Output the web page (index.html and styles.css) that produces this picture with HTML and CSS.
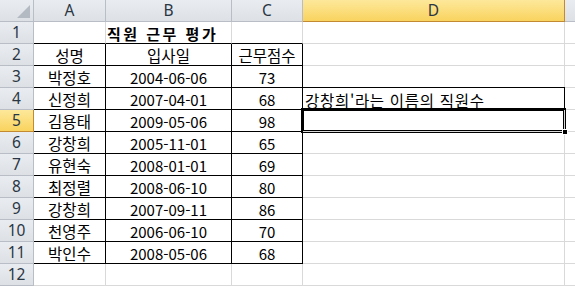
FILE: index.html
```html
<!DOCTYPE html>
<html lang="ko">
<head>
<meta charset="utf-8">
<link rel="stylesheet" href="styles.css">
</head>
<body>
<div class="sheet">
  <div class="grid">
    <div class="hd corner"><span class="tri"></span></div>
    <div class="hd col">A</div>
    <div class="hd col">B</div>
    <div class="hd col">C</div>
    <div class="hd col sel">D</div>
    <div class="hd col"></div>

    <div class="hd row">1</div>
    <div class="c title-cell bb"></div>
    <div class="c title-cell bb"><span class="title">직원 근무 평가</span></div>
    <div class="c title-cell bb"></div>
    <div class="c"></div>
    <div class="c"></div>

    <div class="hd row">2</div>
    <div class="c t ctr">성명</div>
    <div class="c t ctr">입사일</div>
    <div class="c t ctr">근무점수</div>
    <div class="c tl"></div>
    <div class="c"></div>

    <div class="hd row">3</div>
    <div class="c t ctr">박정호</div>
    <div class="c t ctr num">2004-06-06</div>
    <div class="c t ctr num">73</div>
    <div class="c tl"></div>
    <div class="c"></div>

    <div class="hd row">4</div>
    <div class="c t ctr">신정희</div>
    <div class="c t ctr num">2007-04-01</div>
    <div class="c t ctr num">68</div>
    <div class="c tl boxed">강창희'라는 이름의 직원수</div>
    <div class="c"></div>

    <div class="hd row sel">5</div>
    <div class="c t ctr">김용태</div>
    <div class="c t ctr num">2009-05-06</div>
    <div class="c t ctr num">98</div>
    <div class="c tl active"><span class="handle"></span></div>
    <div class="c"></div>

    <div class="hd row">6</div>
    <div class="c t ctr">강창희</div>
    <div class="c t ctr num">2005-11-01</div>
    <div class="c t ctr num">65</div>
    <div class="c tl"></div>
    <div class="c"></div>

    <div class="hd row">7</div>
    <div class="c t ctr">유현숙</div>
    <div class="c t ctr num">2008-01-01</div>
    <div class="c t ctr num">69</div>
    <div class="c tl"></div>
    <div class="c"></div>

    <div class="hd row">8</div>
    <div class="c t ctr">최정렬</div>
    <div class="c t ctr num">2008-06-10</div>
    <div class="c t ctr num">80</div>
    <div class="c tl"></div>
    <div class="c"></div>

    <div class="hd row">9</div>
    <div class="c t ctr">강창희</div>
    <div class="c t ctr num">2007-09-11</div>
    <div class="c t ctr num">86</div>
    <div class="c tl"></div>
    <div class="c"></div>

    <div class="hd row">10</div>
    <div class="c t ctr">천영주</div>
    <div class="c t ctr num">2006-06-10</div>
    <div class="c t ctr num">70</div>
    <div class="c tl"></div>
    <div class="c"></div>

    <div class="hd row">11</div>
    <div class="c t ctr">박인수</div>
    <div class="c t ctr num">2008-05-06</div>
    <div class="c t ctr num">68</div>
    <div class="c tl"></div>
    <div class="c"></div>

    <div class="hd row">12</div>
    <div class="c"></div>
    <div class="c"></div>
    <div class="c"></div>
    <div class="c"></div>
    <div class="c"></div>
  </div>
</div>
</body>
</html>
```

FILE: styles.css
```css
* { box-sizing: border-box; }
html, body { margin: 0; padding: 0; background: #fff; }
body { width: 575px; height: 287px; overflow: hidden; }

.sheet { width: 575px; height: 287px; overflow: hidden; }

.grid {
  display: grid;
  grid-template-columns: 34px 72px 126px 71px 262px 40px;
  grid-template-rows: 22px repeat(12, 22px);
  font-family: "Noto Sans CJK KR", "Noto Sans", sans-serif;
  font-size: 15.5px;
  color: #000;
}

.hd {
  background: linear-gradient(#e9ecf0, #dde1e6);
  border-right: 1px solid #b9bec6;
  border-bottom: 1px solid #b9bec6;
  color: #2a3644;
  font-family: "Noto Sans", sans-serif;
  font-size: 15.5px;
  display: flex;
  align-items: center;
  justify-content: center;
  line-height: 1;
}
.hd.corner { position: relative; }
.hd.corner .tri {
  position: absolute;
  right: 3px;
  bottom: 3px;
  width: 0;
  height: 0;
  border-left: 13px solid transparent;
  border-bottom: 13px solid #b4bac2;
}
.hd.col { padding-top: 1px; }
.hd.row { padding-top: 1px; }
.hd.sel {
  background: linear-gradient(#fde89a, #f9d35f);
  border-right-color: #c48a31;
  border-bottom-color: #c48a31;
  color: #2a3644;
}

.c {
  border-right: 1px solid #d9d9d9;
  border-bottom: 1px solid #d9d9d9;
  line-height: 21px;
  white-space: nowrap;
  position: relative;
}
.c.t {
  border-right-color: #000;
  border-bottom-color: #000;
}
.c.ctr { text-align: center; padding-top: 1px; }
.c.num { font-size: 15px; }
.c.tl { padding-left: 2px; padding-top: 1px; }
.c.bb { border-bottom-color: #000; }
.title-cell { overflow: visible; }
.title {
  position: absolute;
  left: 0;
  top: 1px;
  margin-left: 1px;
  font-size: 15px;
  font-weight: bold;
  letter-spacing: 2.5px;
  white-space: nowrap;
}

.c.boxed {
  border-top: 1px solid #000;
  border-right-color: #000;
  border-bottom-color: #000;
  margin-top: -1px;
  line-height: 21px;
  padding-top: 2px;
  letter-spacing: 0.7px;
  overflow: visible;
}

.c.active { overflow: visible; }
.c.active::before {
  content: "";
  position: absolute;
  left: -2px;
  top: -2px;
  right: -2px;
  bottom: -2px;
  border: 3px double #000;
}
.handle {
  position: absolute;
  right: -4px;
  bottom: -4px;
  width: 6px;
  height: 6px;
  background: #000;
  border: 1px solid #fff;
  z-index: 2;
}
```
